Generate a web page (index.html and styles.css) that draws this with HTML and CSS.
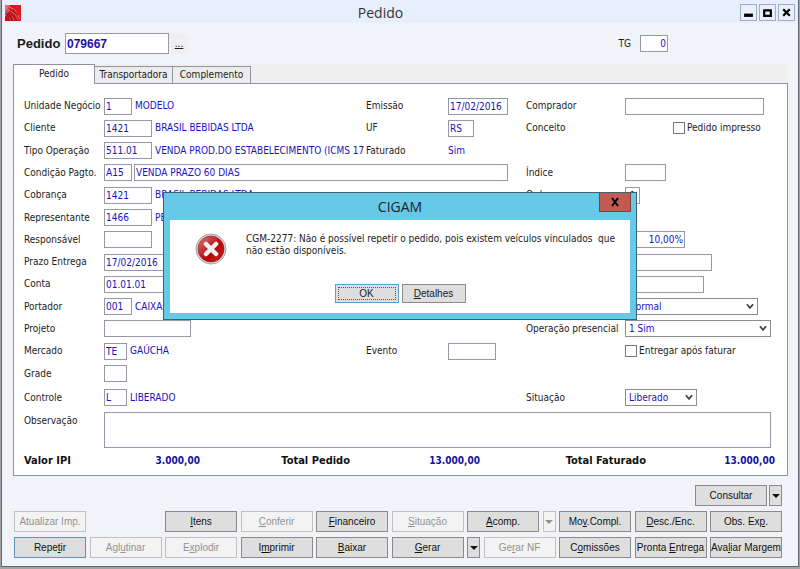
FILE: index.html
```html
<!DOCTYPE html>
<html lang="pt-BR">
<head>
<meta charset="utf-8">
<title>Pedido</title>
<link rel="stylesheet" href="styles.css">
</head>
<body>
<div class="window">
  <header class="titlebar">
    <svg class="logo" viewBox="0 0 16 16" aria-hidden="true">
      <rect width="16" height="16" fill="#c4121a"/>
      <path d="M7 0h9v16h-2z" fill="#dc1a22"/>
      <path d="M0 0h5L2 5 0 9z" fill="#e86a6c"/>
      <path d="M0 11L5 2l5 3 5 9M2 4l8 5 3 6M4 1l7 6M3 6l6 9M1 10l5 5" fill="none" stroke="#f09a9a" stroke-width=".6"/>
      <path d="M4 7l3 8M8 4l5 6M2 9l2 6" fill="none" stroke="#7a0a10" stroke-width=".8"/>
    </svg>
    <h1 class="title">Pedido</h1>
    <div class="winbtns">
      <button class="winbtn" aria-label="Minimizar"><svg viewBox="0 0 10 10"><path d="M1 6h8v3H1z"/></svg></button>
      <button class="winbtn" aria-label="Maximizar"><svg viewBox="0 0 10 10"><path fill-rule="evenodd" d="M1 2h8v7H1zM3 4v3h4V4z"/></svg></button>
      <button class="winbtn" aria-label="Fechar"><svg viewBox="0 0 10 10"><path d="M2 2l6 6M8 2L2 8" stroke="#000" stroke-width="2"/></svg></button>
    </div>
  </header>

  <div class="order">
    <label class="order-label" for="pedido">Pedido</label>
    <input class="order-input" id="pedido" value="079667">
    <button class="more" aria-label="Procurar">...</button>
    <label class="tg-label" for="tg">TG</label>
    <input class="field tg right" id="tg" value="0">
  </div>

  <nav class="tabs">
    <button class="tab active">Pedido</button>
    <button class="tab">Transportadora</button>
    <button class="tab">Complemento</button>
  </nav>

  <main class="panel">
    <div class="row">
      <label for="un">Unidade Negócio</label>
      <div class="cell"><input class="field w28" id="un" value="1"><span class="val">MODELO</span></div>
      <label for="em">Emissão</label>
      <div class="cell"><input class="field w60" id="em" value="17/02/2016"></div>
      <label for="co">Comprador</label>
      <div class="cell"><input class="field w139" id="co"></div>
    </div>
    <div class="row">
      <label for="cl">Cliente</label>
      <div class="cell"><input class="field w48" id="cl" value="1421"><span class="val">BRASIL BEBIDAS LTDA</span></div>
      <label for="uf">UF</label>
      <div class="cell"><input class="field w26" id="uf" value="RS"></div>
      <span>Conceito</span>
      <div class="cell printed"><input type="checkbox" class="check" id="pi"><label for="pi">Pedido impresso</label></div>
    </div>
    <div class="row">
      <label for="to">Tipo Operação</label>
      <div class="cell clip"><input class="field w48" id="to" value="511.01"><span class="val">VENDA PROD.DO ESTABELECIMENTO (ICMS 17</span></div>
      <span>Faturado</span>
      <div class="cell"><span class="flat">Sim</span></div>
    </div>
    <div class="row">
      <label for="cp">Condição Pagto.</label>
      <div class="cell wide"><input class="field w28" id="cp" value="A15"><input class="field grow" aria-label="Descrição da condição" value="VENDA PRAZO 60 DIAS"></div>
      <label for="in">Índice</label>
      <div class="cell"><input class="field w41" id="in"></div>
    </div>
    <div class="row">
      <label for="cb">Cobrança</label>
      <div class="cell wide"><input class="field w48" id="cb" value="1421"><span class="val">BRASIL BEBIDAS LTDA</span></div>
      <label for="or">Ordem</label>
      <div class="cell"><input class="field w15" id="or" value="1"></div>
    </div>
    <div class="row">
      <label for="re">Representante</label>
      <div class="cell wide"><input class="field w48" id="re" value="1466"><span class="val">PE</span></div>
    </div>
    <div class="row">
      <label for="rs">Responsável</label>
      <div class="cell wide"><input class="field w48" id="rs"></div>
      <span></span>
      <div class="cell"><input class="field w60 right" aria-label="Percentual" value="10,00%"></div>
    </div>
    <div class="row">
      <label for="pe">Prazo Entrega</label>
      <div class="cell wide"><input class="field w60" id="pe" value="17/02/2016"></div>
      <span></span>
      <div class="cell"><input class="field w87" aria-label="Complemento do prazo"></div>
    </div>
    <div class="row">
      <label for="ct">Conta</label>
      <div class="cell wide"><input class="field w87" id="ct" value="01.01.01"></div>
      <span></span>
      <div class="cell"><input class="field w79" aria-label="Complemento da conta"></div>
    </div>
    <div class="row">
      <label for="po">Portador</label>
      <div class="cell wide"><input class="field w28" id="po" value="001"><span class="val">CAIXA</span></div>
      <span></span>
      <div class="cell"><span class="drop w133"><select aria-label="Tipo"><option>Normal</option></select><svg viewBox="0 0 9 7"><path d="M1 1l3.500 4L8 1"/></svg></span></div>
    </div>
    <div class="row">
      <label for="pr">Projeto</label>
      <div class="cell wide"><input class="field w87" id="pr"></div>
      <label for="op">Operação presencial</label>
      <div class="cell"><span class="drop w146"><select id="op"><option>1 Sim</option></select><svg viewBox="0 0 9 7"><path d="M1 1l3.500 4L8 1"/></svg></span></div>
    </div>
    <div class="row">
      <label for="me">Mercado</label>
      <div class="cell"><input class="field w22" id="me" value="TE"><span class="val">GAÚCHA</span></div>
      <label for="ev">Evento</label>
      <div class="cell"><input class="field w48" id="ev"></div>
      <span></span>
      <div class="cell"><input type="checkbox" class="check" id="ea"><label for="ea">Entregar após faturar</label></div>
    </div>
    <div class="row">
      <label for="gr">Grade</label>
      <div class="cell wide"><input class="field w22" id="gr"></div>
    </div>
    <div class="row status">
      <label for="cn">Controle</label>
      <div class="cell wide"><input class="field w22" id="cn" value="L"><span class="val">LIBERADO</span></div>
      <label for="si">Situação</label>
      <div class="cell"><span class="drop w72"><select id="si"><option>Liberado</option></select><svg viewBox="0 0 9 7"><path d="M1 1l3.500 4L8 1"/></svg></span></div>
    </div>
    <div class="notes">
      <label for="ob">Observação</label>
      <textarea id="ob"></textarea>
    </div>
    <div class="totals">
      <span>Valor IPI</span><output>3.000,00</output>
      <span>Total Pedido</span><output>13.000,00</output>
      <span>Total Faturado</span><output>13.000,00</output>
    </div>
  </main>

  <footer class="actions">
    <div class="bar end">
      <button class="btn">Consultar</button>
      <button class="btn arrow" aria-label="Opções de consulta"></button>
    </div>
    <div class="bar">
      <button class="btn" disabled>Atualizar Imp.</button>
      <span class="slot"></span>
      <button class="btn"><u>I</u>tens</button>
      <button class="btn" disabled><u>C</u>onferir</button>
      <button class="btn"><u>F</u>inanceiro</button>
      <button class="btn" disabled><u>S</u>ituação</button>
      <button class="btn"><u>A</u>comp.</button>
      <button class="btn arrow" disabled aria-label="Opções de acompanhamento"></button>
      <button class="btn">Mo<u>v</u>.Compl.</button>
      <button class="btn"><u>D</u>esc./Enc.</button>
      <button class="btn">Obs. Ex<u>p</u>.</button>
    </div>
    <div class="bar">
      <button class="btn focus">Repe<u>t</u>ir</button>
      <button class="btn" disabled>Agl<u>u</u>tinar</button>
      <button class="btn" disabled>E<u>x</u>plodir</button>
      <button class="btn">I<u>m</u>primir</button>
      <button class="btn"><u>B</u>aixar</button>
      <button class="btn"><u>G</u>erar</button>
      <button class="btn arrow" aria-label="Opções de geração"></button>
      <button class="btn" disabled>Ge<u>r</u>ar NF</button>
      <button class="btn">C<u>o</u>missões</button>
      <button class="btn">Pronta <u>E</u>ntrega</button>
      <button class="btn">Ava<u>l</u>iar Margem</button>
    </div>
  </footer>

  <section class="dialog" role="alertdialog" aria-labelledby="dlg-title">
    <header class="dlg-head">
      <h2 id="dlg-title">CIGAM</h2>
      <button class="dlg-close" aria-label="Fechar"><svg viewBox="0 0 10 10"><path d="M2 1l6 8M8 1L2 9" stroke="#000" stroke-width="2"/></svg></button>
    </header>
    <div class="dlg-body">
      <div class="dlg-msg">
        <svg class="error" viewBox="0 0 32 32" aria-hidden="true">
          <defs><linearGradient id="red" x1="0" y1="0" x2="1" y2="1"><stop offset="0" stop-color="#e08080"/><stop offset=".45" stop-color="#c22020"/><stop offset=".6" stop-color="#b80808"/><stop offset="1" stop-color="#d42020"/></linearGradient></defs>
          <circle cx="16" cy="16" r="15" fill="#d6d6d6" stroke="#a4a4a4"/>
          <circle cx="16" cy="16" r="13" fill="url(#red)" stroke="#8e1010" stroke-width=".6"/>
          <path d="M11 11l10 10M21 11L11 21" stroke="#f1f1f1" stroke-width="4.500" stroke-linecap="round"/>
        </svg>
        <p>CGM-2277: Não é possível repetir o pedido, pois existem veículos vinculados &nbsp;que<br>não estão disponíveis.</p>
      </div>
      <div class="dlg-btns">
        <button class="dlg-btn default">OK</button>
        <button class="dlg-btn"><u>D</u>etalhes</button>
      </div>
    </div>
  </section>
</div>
</body>
</html>
```
FILE: styles.css
```css
* { box-sizing: border-box; }

body {
  margin: 0;
  background: #a3a3a3;
  color: #1c1c1c;
  font: 10px/12px "DejaVu Sans Condensed", "DejaVu Sans", sans-serif;
}

button, input, select, textarea { font: inherit; color: inherit; margin: 0; border-radius: 0; }
h1, h2, p { margin: 0; font-weight: 400; }

.window {
  position: relative;
  display: flex;
  flex-direction: column;
  min-height: calc(100vh - 2px);
  margin: 0 1px 2px;
  border: 1px solid #62666f;
  border-top: 0;
  background: #f2f3f9;
}

.titlebar {
  display: flex;
  align-items: center;
  height: 23px;
  padding: 2px 3px 0;
  background: #e7efff;
}
.logo { width: 16px; height: 16px; }
.title {
  flex: 1;
  text-align: center;
  font: 14px/20px "Open Sans", sans-serif;
  color: #333;
}
.winbtns { display: flex; gap: 2px; }
.winbtn {
  display: grid;
  place-items: center;
  width: 17px;
  height: 17px;
  padding: 0;
  border: 1px solid #a2abc0;
  background: #e9effc;
}
.winbtn svg { width: 11px; height: 11px; }

.order {
  display: flex;
  align-items: center;
  height: 41px;
  padding: 0 130px 0 15px;
}
.order-label { width: 48px; font: bold 13px/16px "Liberation Sans", sans-serif; }
.order-input {
  width: 104px;
  height: 21px;
  padding: 0 1px;
  border: 1px solid #9599a5;
  background: #fff;
  color: #1a12a8;
  font: bold 12px/16px "Liberation Sans", sans-serif;
}
.more {
  width: 18px;
  height: 20px;
  margin-left: 1px;
  padding: 0;
  border: 0;
  background: #efefef;
  text-decoration: underline;
}
.tg-label { margin-left: auto; padding-right: 9px; }
.tg { width: 28px; }

.tabs {
  display: flex;
  align-items: flex-end;
  height: 19px;
  margin: 0 10px 0 11px;
  background: #efefef;
}
.tab {
  width: 78px;
  height: 17px;
  padding: 0 2px;
  border: 1px solid #8f93a0;
  border-left: 0;
  border-bottom: 0;
  background: #ececec;
}
.tab.active {
  z-index: 1;
  width: 82px;
  height: 20px;
  margin-bottom: -1px;
  padding-bottom: 2px;
  border-left: 1px solid #8f93a0;
  background: #fff;
}

.panel {
  display: flex;
  flex: 1;
  flex-direction: column;
  margin: 0 10px 0 11px;
  padding: 11px 0 0 10px;
  border: 1px solid #8f93a0;
  background: #fff;
}
.row {
  display: grid;
  flex: 1;
  grid-template-columns: 80px minmax(0, 1fr) 82px 78px 99px 162px;
  align-items: center;
  white-space: nowrap;
}
.status { margin-top: 2px; }
.cell { display: flex; align-items: center; overflow: hidden; }
.wide { grid-column: 2 / 5; padding-right: 18px; }
.clip { margin-right: 2px; }

.field {
  height: 17px;
  padding: 0 1px;
  border: 1px solid #9599a5;
  background: #fff;
  color: #1a12c0;
}
.field + .field { margin-left: 2px; }
.grow { flex: 1; }
.right { text-align: right; }
.val { padding-left: 3px; color: #1a12c0; }
.flat { color: #1a12c0; }

.w15 { width: 15px; text-align: center; }
.w22 { width: 23px; }
.w26 { width: 26px; }
.w28 { width: 28px; }
.w41 { width: 41px; }
.w48 { width: 48px; }
.w60 { width: 60px; }
.w72 { width: 72px; }
.w79 { width: 79px; }
.w87 { width: 87px; }
.w133 { width: 133px; }
.w139 { width: 139px; }
.w146 { width: 146px; }

.check {
  appearance: none;
  width: 12px;
  height: 12px;
  margin-right: 2px;
  border: 1px solid #777;
  background: #fff;
}
.printed { padding-left: 48px; }

.drop {
  display: flex;
  align-items: center;
  height: 17px;
  padding-right: 3px;
  border: 1px solid #8b8e96;
  background: #fff;
}
.drop select {
  appearance: none;
  flex: 1;
  min-width: 0;
  padding: 0 3px;
  border: 0;
  background: none;
  color: #1a12c0;
}
.drop svg { width: 8px; height: 7px; fill: none; stroke: #444; stroke-width: 2; }

.notes {
  display: grid;
  grid-template-columns: 80px minmax(0, 1fr);
  margin-top: 3px;
  padding-right: 16px;
}
.notes label { padding-top: 3px; }
.notes textarea {
  height: 36px;
  border: 1px solid #9599a5;
  background: #fff;
  resize: none;
}

.totals {
  display: grid;
  grid-template-columns: 80px 96px 150fr 130fr 166fr 129fr;
  align-items: center;
  height: 27px;
  padding-right: 12px;
  color: #111;
  font-weight: bold;
}
.totals span { font-size: 11px; }
.totals span:nth-of-type(n + 2) { justify-self: end; }
.totals output { text-align: right; color: #14129c; }

.actions {
  display: flex;
  flex-direction: column;
  gap: 5px;
  padding: 9px 16px 8px 12px;
}
.bar { display: flex; justify-content: space-between; }
.end { justify-content: flex-end; gap: 2px; }
.slot { width: 72px; }
.btn {
  width: 72px;
  height: 21px;
  padding: 0;
  border: 1px solid #8a8a8a;
  background: #dedede;
  color: #111;
  font: 10px/14px "Liberation Sans", sans-serif;
  white-space: nowrap;
}
.btn:disabled { border-color: #bfc0c4; background: #f3f3f4; color: #929292; }
.focus { border-color: #5e93bd; }
.arrow { display: grid; place-items: center; width: 13px; }
.arrow::after {
  content: "";
  border: 4px solid transparent;
  border-top-color: currentColor;
  border-bottom: 0;
}

.dialog {
  position: absolute;
  z-index: 2;
  top: 192px;
  left: 50%;
  width: 474px;
  padding: 0 6px 6px;
  border: 1px solid #3c6172;
  background: #66c9e8;
  transform: translateX(-50%);
}
.dlg-head { display: flex; justify-content: center; height: 27px; }
.dlg-head h2 { font: 14px/28px "Open Sans", sans-serif; color: #222; }
.dlg-close {
  position: absolute;
  top: 0;
  right: 5px;
  display: grid;
  place-items: center;
  width: 32px;
  height: 19px;
  padding: 0;
  border: 1px solid #813f3b;
  border-top: 0;
  background: #c35a50;
}
.dlg-close svg { width: 10px; height: 10px; }
.dlg-body { padding: 13px 0 10px; background: #fff; }
.dlg-msg { display: flex; gap: 19px; padding-left: 25px; }
.error { width: 32px; height: 32px; }
.dlg-btns { display: flex; justify-content: center; gap: 3px; margin-top: 19px; }
.dlg-btn {
  width: 64px;
  height: 19px;
  padding: 0;
  border: 1px solid #8a8a8a;
  background: #dedede;
  font: 10px/14px "Liberation Sans", sans-serif;
}
.default { border-color: #5f9fcb; outline: 1px dotted #555; outline-offset: -4px; }
```
